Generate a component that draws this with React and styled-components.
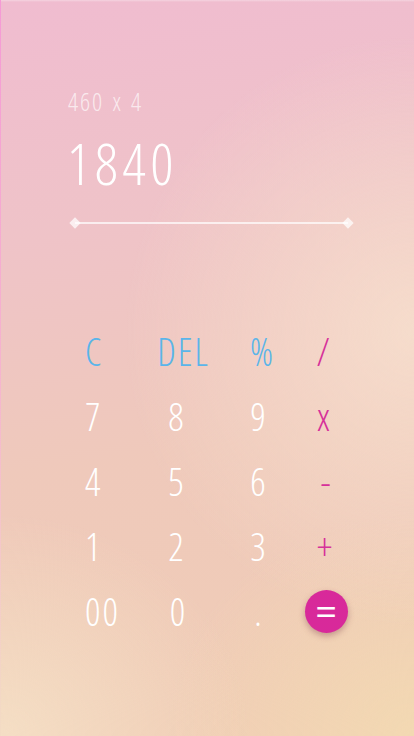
import React from "react";
import styled, { createGlobalStyle } from "styled-components";

const Global = createGlobalStyle`
  html, body { margin: 0; padding: 0; }
  body { font-family: "Open Sans", "Noto Sans", sans-serif; }
`;

const Screen = styled.div`
  width: 414px;
  min-height: 736px;
  box-sizing: border-box;
  border-left: 1px solid transparent;
  border-image: linear-gradient(180deg, #f59ad6 0%, #f5b4cf 50%, #f3dcc4 100%) 1;
  background:
    linear-gradient(180deg, rgba(255,255,255,0.35) 0, rgba(255,255,255,0) 2px),
    radial-gradient(ellipse 70% 40% at 100% 45%, rgba(247,224,206,0.85), rgba(247,224,206,0) 100%),
    radial-gradient(ellipse 60% 30% at 0% 100%, rgba(245,224,198,0.9), rgba(245,224,198,0) 100%),
    radial-gradient(ellipse 60% 30% at 100% 100%, rgba(243,218,178,0.9), rgba(243,218,178,0) 100%),
    linear-gradient(172deg, #f0bcd0 0%, #efc3c8 30%, #efc9bb 60%, #f0cdb5 100%);
  font-family: "Open Sans", "Noto Sans", sans-serif;
  font-stretch: condensed;
  font-weight: 300;
  color: #fff;
`;

const Display = styled.div`
  padding: 86px 60px 0 67px;
  display: flex;
  flex-direction: column;
`;

const Expression = styled.div`
  font-size: 25px;
  line-height: 30px;
  font-weight: 330;
  color: rgba(255, 255, 255, 0.68);
  letter-spacing: 1.8px;
  word-spacing: 2px;
`;

const Result = styled.div`
  margin-top: 15px;
  font-size: 57px;
  line-height: 64px;
  font-weight: 330;
  letter-spacing: 4.5px;
  margin-left: -1px;
`;

const Divider = styled.div`
  margin-top: 22px;
  margin-left: 3px;
  margin-right: 2px;
  height: 12px;
  display: flex;
  align-items: center;
`;

const Rail = styled.div`
  flex: 1;
  height: 2px;
  margin: 0 -4px;
  background: rgba(255, 255, 255, 0.7);
`;

const Diamond = styled.div`
  width: 8px;
  height: 8px;
  transform: rotate(45deg);
  background: rgba(255, 255, 255, 0.72);
  flex: none;
`;

const Pad = styled.div`
  margin-top: 90px;
  padding-left: 52px;
  display: grid;
  grid-template-columns: 82px 82px 82px 50px;
  grid-auto-rows: 65px;
  align-items: center;
`;

const Key = styled.div`
  font-size: 38px;
  font-weight: 350;
  line-height: 65px;
  letter-spacing: ${(p) => (p.$wide ? "2px" : "0")};
  justify-self: ${(p) => (p.$start ? "start" : "center")};
  padding-left: ${(p) => (p.$start ? "32px" : "0")};
  margin-left: ${(p) => p.$shift || 0}px;
  color: ${(p) => (p.$tone === "blue" ? "#5ab5ea" : p.$tone === "pink" ? "#d6319a" : "#ffffff")};
`;

const Equals = styled.div`
  justify-self: center;
  margin-left: 4px;
  width: 43px;
  height: 43px;
  border-radius: 50%;
  background: #d8299a;
  box-shadow: 0 3px 6px rgba(110, 40, 60, 0.35);
  display: flex;
  align-items: center;
  justify-content: center;
  font-stretch: normal;
  font-weight: 400;
  font-size: 38px;
  line-height: 1;
  color: #fff;
  padding-bottom: 3px;
  box-sizing: border-box;
`;

const keys = [
  [{ t: "C", tone: "blue", start: true }, { t: "DEL", tone: "blue", shift: 15, wide: true }, { t: "%", tone: "blue", shift: 7 }, { t: "/", tone: "pink", shift: -2 }],
  [{ t: "7", start: true }, { t: "8" }, { t: "9" }, { t: "x", tone: "pink", shift: -1 }],
  [{ t: "4", start: true }, { t: "5" }, { t: "6" }, { t: "-", tone: "pink", shift: 3 }],
  [{ t: "1", start: true }, { t: "2" }, { t: "3" }, { t: "+", tone: "pink", shift: 1 }],
  [{ t: "00", start: true, wide: true }, { t: "0", shift: 3 }, { t: "." }],
];

export default function App() {
  return (
    <Screen>
      <Global />
      <Display>
        <Expression>460 x 4</Expression>
        <Result>1840</Result>
        <Divider>
          <Diamond />
          <Rail />
          <Diamond />
        </Divider>
      </Display>
      <Pad>
        {keys.flat().map((k, i) => (
          <Key key={i} $tone={k.tone} $start={k.start} $shift={k.shift} $wide={k.wide}>
            {k.t}
          </Key>
        ))}
        <Equals>=</Equals>
      </Pad>
    </Screen>
  );
}
